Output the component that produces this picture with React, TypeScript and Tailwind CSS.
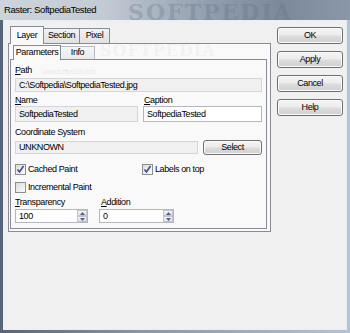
import React from "react";

const font = "font-['Liberation_Sans',Arial,sans-serif] text-[9px] tracking-[-0.4px] text-black";

function Mn({ k, rest }: { k: string; rest: string }) {
  return (
    <span>
      <span className="underline underline-offset-1">{k}</span>
      {rest}
    </span>
  );
}

function Label({ children, className = "" }: { children: React.ReactNode; className?: string }) {
  return <div className={`h-[11px] leading-[11px] ${className}`}>{children}</div>;
}

function Field({ value, readOnly, className = "" }: { value: string; readOnly?: boolean; className?: string }) {
  return (
    <div
      className={`flex items-center border px-[3px] leading-none ${
        readOnly ? "border-[#d3d5d9] bg-[#f0f0f0]" : "border-[#b4b7be] bg-white"
      } ${className}`}
    >
      {value}
    </div>
  );
}

function Button({ label, className = "" }: { label: string; className?: string }) {
  return (
    <div
      className={`flex items-center justify-center rounded-[3px] border border-[#707070] bg-[linear-gradient(180deg,#f4f4f4_0%,#ececec_48%,#dcdcdc_52%,#d0d0d0_100%)] shadow-[inset_0_0_0_1px_#fbfbfb] ${className}`}
    >
      {label}
    </div>
  );
}

function Check({ label, checked, className = "" }: { label: string; checked?: boolean; className?: string }) {
  return (
    <div className={`flex h-[12px] items-center gap-[2px] ${className}`}>
      <div className="flex h-[11px] w-[11px] items-center justify-center border border-[#8f8f8f] bg-[linear-gradient(135deg,#dcdcdc_0%,#fbfbfb_100%)]">
        {checked && (
          <svg width="9" height="9" viewBox="0 0 9 9">
            <path d="M1.5 4.5 L3.5 7 L7.5 1" fill="none" stroke="#3b4f8a" strokeWidth="1.6" />
          </svg>
        )}
      </div>
      <span className="leading-none">{label}</span>
    </div>
  );
}

function Spin({ value, className = "" }: { value: string; className?: string }) {
  return (
    <div className={`flex h-[14px] items-stretch border border-[#b4b7be] bg-white ${className}`}>
      <div className="flex flex-1 items-center px-[3px] leading-none">{value}</div>
      <div className="flex w-[10px] flex-col">
        {["up", "down"].map((d) => (
          <div
            key={d}
            className="flex flex-1 items-center justify-center border border-[#c2c4c9] bg-[linear-gradient(180deg,#f5f5f5,#e2e2e2)]"
          >
            <svg width="5" height="3" viewBox="0 0 5 3">
              <path d={d === "up" ? "M0 3 L2.5 0 L5 3 Z" : "M0 0 L2.5 3 L5 0 Z"} fill="#4d6185" />
            </svg>
          </div>
        ))}
      </div>
    </div>
  );
}

export default function App() {
  return (
    <div
      className={`relative flex h-[333px] w-[350px] flex-col overflow-hidden bg-[linear-gradient(90deg,#56657a_0%,#8797ab_40%,#b3c4d6_100%)] ${font}`}
    >
      {/* title bar */}
      <div className="relative flex h-[20px] items-center bg-[linear-gradient(90deg,#cdd4dc_0%,#c2cad4_30%,#8e9bac_62%,#7c899b_80%,#8a97a8_100%)] px-[4px] text-[9.5px]">
        <span>Raster: SoftpediaTested</span>
        <span className="pointer-events-none absolute left-[128px] top-[-4px] font-['DejaVu_Serif',serif] text-[22px] font-bold tracking-[2px] text-[#5f6d80]/30">
          SOFTPEDIA
        </span>
      </div>

      {/* client */}
      <div className="relative mx-[3px] mb-[3px] flex flex-1 border border-[#e9eef4] bg-[#f0f0f0] pl-[4px] pt-[4px]">
        {/* outer tab control */}
        <div className="flex w-[263px] flex-col">
          <div className="flex h-[18px] items-end pl-[2px]">
            <div className="relative z-10 -mb-px flex h-[18px] w-[34px] items-center justify-center border border-b-0 border-[#898c95] bg-[#f9f9f9]">
              Layer
            </div>
            <div className="flex h-[15px] w-[36px] items-center justify-center border border-l-0 border-b-0 border-[#898c95] bg-[linear-gradient(180deg,#f2f2f2,#e1e1e1)]">
              Section
            </div>
            <div className="flex h-[15px] w-[30px] items-center justify-center border border-l-0 border-b-0 border-[#898c95] bg-[linear-gradient(180deg,#f2f2f2,#e1e1e1)]">
              Pixel
            </div>
          </div>
          <div className="flex h-[189px] flex-col border border-[#898c95] bg-[#f9f9f9]">
            {/* inner tab control */}
            <div className="flex h-[15px] items-end pl-[4px]">
              <div className="relative z-10 -mb-px flex h-[15px] w-[48px] items-center justify-center border border-b-0 border-[#898c95] bg-[#f9f9f9]">
                Parameters
              </div>
              <div className="flex h-[13px] w-[34px] items-center justify-center border border-l-0 border-b-0 border-[#b9bcc3] bg-[linear-gradient(180deg,#f6f6f6,#eaeaea)]">
                Info
              </div>
            </div>
            <div className="ml-[1px] flex h-[170px] w-[257px] flex-col border border-[#898c95] bg-[#f9f9f9] px-[4px]">
              <Label className="mt-[5px]">
                <Mn k="P" rest="ath" />
              </Label>
              <Field value="C:\Softpedia\SoftpediaTested.jpg" readOnly className="mt-[2px] h-[14px]" />
              <div className="mt-[3px] flex gap-[5px]">
                <div className="flex w-[123px] flex-col">
                  <Label>
                    <Mn k="N" rest="ame" />
                  </Label>
                  <Field value="SoftpediaTested" readOnly className="h-[16px]" />
                </div>
                <div className="flex flex-1 flex-col">
                  <Label className="pl-[1px]">
                    <Mn k="C" rest="aption" />
                  </Label>
                  <Field value="SoftpediaTested" className="h-[16px]" />
                </div>
              </div>
              <Label className="mt-[5px]">Coordinate System</Label>
              <div className="mt-[2px] flex h-[15px] items-center gap-[5px]">
                <Field value="UNKNOWN" readOnly className="h-[13px] w-[183px]" />
                <Button label="Select" className="h-[15px] flex-1" />
              </div>
              <div className="mt-[8px] flex">
                <Check label="Cached Paint" checked className="w-[127px]" />
                <Check label="Labels on top" checked />
              </div>
              <Check label="Incremental Paint" className="mt-[6px]" />
              <div className="mt-[4px] flex gap-[11px]">
                <div className="flex w-[73px] flex-col">
                  <Label>
                    <Mn k="T" rest="ransparency" />
                  </Label>
                  <Spin value="100" className="mt-[1px]" />
                </div>
                <div className="flex w-[75px] flex-col">
                  <Label className="pl-[2px]">
                    <Mn k="A" rest="ddition" />
                  </Label>
                  <Spin value="0" className="mt-[1px]" />
                </div>
              </div>
            </div>
          </div>
        </div>

        {/* buttons */}
        <div className="ml-[6px] mt-[2px] flex w-[66px] flex-col gap-[7px]">
          <Button label="OK" className="h-[17px]" />
          <Button label="Apply" className="h-[17px]" />
          <Button label="Cancel" className="h-[17px]" />
          <Button label="Help" className="h-[17px]" />
        </div>

        {/* watermarks */}
        <span className="pointer-events-none absolute left-[96px] top-[18px] font-['DejaVu_Serif',serif] text-[16px] font-bold tracking-[1px] text-black/[0.05]">
          SOFTPEDIA
        </span>
        <span className="pointer-events-none absolute left-[38px] top-[46px] text-[7px] text-black/10">
          www.softpedia.com
        </span>
      </div>
    </div>
  );
}
